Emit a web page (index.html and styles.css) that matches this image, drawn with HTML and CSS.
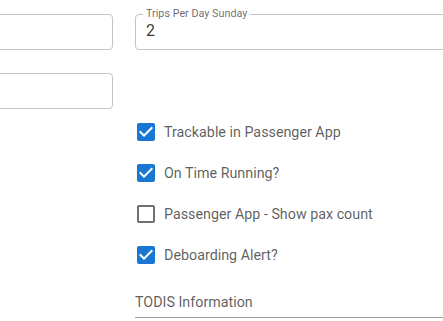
FILE: index.html
```html
<!DOCTYPE html>
<html lang="en">
<head>
  <meta charset="UTF-8" />
  <meta name="viewport" content="width=device-width, initial-scale=1" />
  <title>Route settings</title>
  <link rel="stylesheet" href="styles.css">
</head>
<body>
  <form class="route-form">
    <div class="col col-left">
      <div class="box"></div>
      <div class="box"></div>
    </div>

    <div class="col col-right">
      <fieldset class="outlined">
        <legend>Trips Per Day Sunday</legend>
        <input type="text" value="2" />
      </fieldset>

      <div class="checks">
        <label class="check">
          <svg viewBox="0 0 24 24" class="on"><path d="M19 3H5c-1.11 0-2 .9-2 2v14c0 1.1.89 2 2 2h14c1.11 0 2-.9 2-2V5c0-1.1-.89-2-2-2zm-9 14l-5-5 1.41-1.41L10 14.170l7.59-7.59L19 8l-9 9z"/></svg>
          <span>Trackable in Passenger App</span>
        </label>
        <label class="check">
          <svg viewBox="0 0 24 24" class="on"><path d="M19 3H5c-1.11 0-2 .9-2 2v14c0 1.1.89 2 2 2h14c1.11 0 2-.9 2-2V5c0-1.1-.89-2-2-2zm-9 14l-5-5 1.41-1.41L10 14.17l7.59-7.59L19 8l-9 9z"/></svg>
          <span>On Time Running?</span>
        </label>
        <label class="check">
          <svg viewBox="0 0 24 24" class="off"><path d="M19 5v14H5V5h14m0-2H5c-1.1 0-2 .9-2 2v14c0 1.1.9 2 2 2h14c1.1 0 2-.9 2-2V5c0-1.1-.9-2-2-2z"/></svg>
          <span>Passenger App - Show pax count</span>
        </label>
        <label class="check">
          <svg viewBox="0 0 24 24" class="on"><path d="M19 3H5c-1.11 0-2 .9-2 2v14c0 1.1.89 2 2 2h14c1.11 0 2-.9 2-2V5c0-1.1-.89-2-2-2zm-9 14l-5-5 1.41-1.41L10 14.17l7.59-7.59L19 8l-9 9z"/></svg>
          <span>Deboarding Alert?</span>
        </label>
      </div>

      <h3 class="section">TODIS Information</h3>
    </div>
  </form>
</body>
</html>
```

FILE: styles.css
```css
* {
  box-sizing: border-box;
}
body {
  margin: 0;
  overflow: hidden;
  background-color: #fff;
  font-family: Roboto, 'Liberation Sans', sans-serif;
  color: rgba(0, 0, 0, 0.65);
}
.route-form {
  display: grid;
  grid-template-columns: 300px 340px;
  column-gap: 22px;
  margin-left: -187px;
}
.col-left {
  display: flex;
  flex-direction: column;
  gap: 23px;
  padding-top: 14px;
}
.box {
  height: 36px;
  border: 1px solid #c4c4c4;
  border-radius: 4px;
}
.col-right {
  padding-top: 9px;
}
.outlined {
  margin: 0;
  height: 41px;
  padding: 0 7px;
  border: 1px solid #c4c4c4;
  border-radius: 4px;
}
.outlined legend {
  padding: 0 3px;
  font-size: 10.8px;
  line-height: 10px;
  color: rgba(0, 0, 0, 0.6);
}
.outlined input {
  display: block;
  width: 100%;
  margin: 2px 0 0 3px;
  padding: 0;
  border: none;
  outline: none;
  font-family: inherit;
  font-size: 16px;
  line-height: 19px;
  color: rgba(0, 0, 0, 0.8);
  background: transparent;
}
.checks {
  margin-top: 61px;
}
.check {
  display: flex;
  align-items: center;
  height: 41px;
  margin-left: -1px;
  font-size: 14.3px;
}
.check svg {
  width: 24px;
  height: 24px;
  flex: none;
}
.check svg.on {
  fill: #1976d2;
}
.check svg.off {
  fill: #6f6f6f;
}
.check span {
  margin-left: 6px;
}
.section {
  margin: 17px 0 0;
  padding-bottom: 5px;
  border-bottom: 1px solid #a0a0a0;
  font-size: 14.3px;
  font-weight: 400;
  line-height: 20px;
  color: rgba(0, 0, 0, 0.65);
}
```
